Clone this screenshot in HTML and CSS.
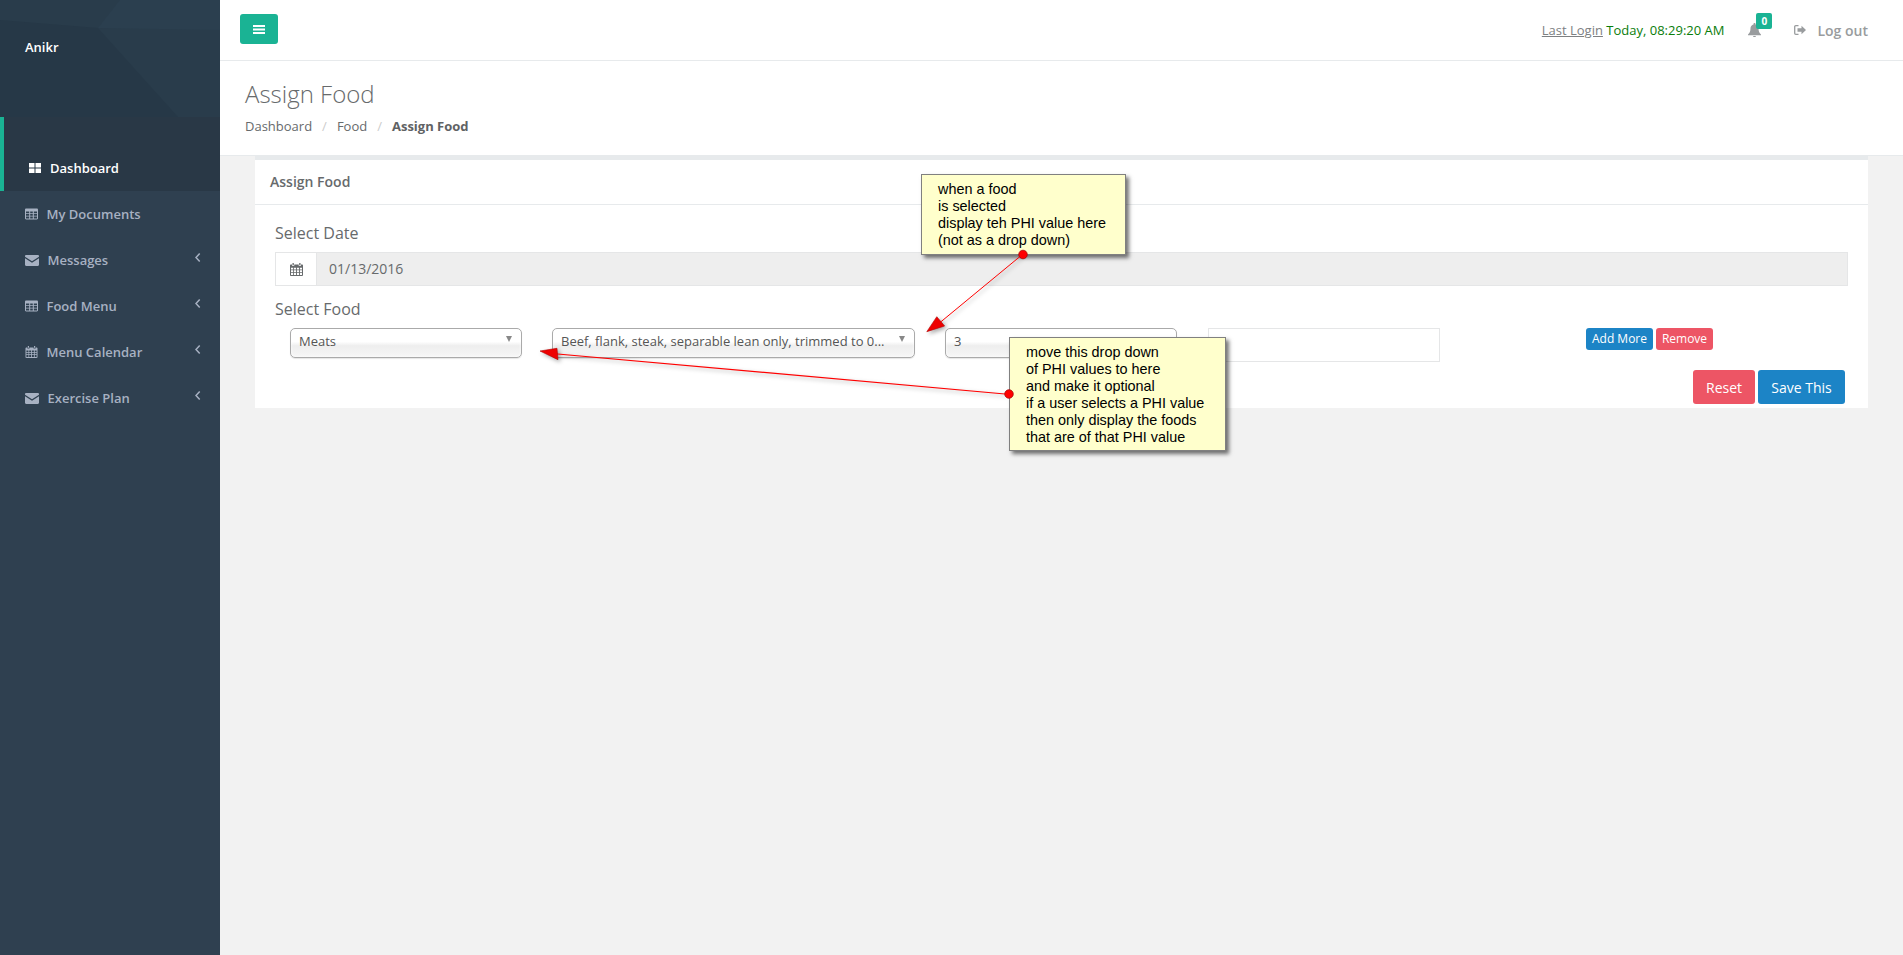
FILE: index.html
```html
<!DOCTYPE html>
<html lang="en">
<head>
<meta charset="utf-8">
<title>Assign Food</title>
<link rel="stylesheet" href="styles.css">
</head>
<body>
<svg width="0" height="0" class="defs">
  <symbol id="i-table" viewBox="0 0 13 11"><path fill-rule="evenodd" d="M0 1.200C0 .5.500 0 1.200 0h10.600c.7 0 1.200.5 1.200 1.200v8.600c0 .7-.5 1.200-1.200 1.200H1.200C.5 11 0 10.500 0 9.800zM1 3v1.800h3.200V3zm4.200 0v1.800h2.600V3zm3.600 0v1.800H12V3zM1 5.600v1.700h3.200V5.600zm4.200 0v1.700h2.600V5.600zm3.600 0v1.700H12V5.600zM1 8.100V10h3.200V8.100zm4.200 0V10h2.600V8.100zm3.600 0V10H12V8.100z"/></symbol>
  <symbol id="i-mail" viewBox="0 0 14 11"><path d="M0 1.200C0 .5.500 0 1.200 0h11.600c.7 0 1.200.5 1.200 1.200v.5L7 6.300 0 1.700zM0 3.300V9.800c0 .7.500 1.200 1.200 1.200h11.600c.7 0 1.200-.5 1.200-1.200V3.300L7 7.800z"/></symbol>
  <symbol id="i-cal" viewBox="0 0 13 13"><path fill-rule="evenodd" d="M2.500 0h1.300v2H2.500zM9.200 0h1.300v2H9.200zM0 2.500C0 1.900.5 1.500 1 1.500h1v1.200h2.300V1.500h4.400v1.200H11V1.500h1c.5 0 1 .4 1 1V12c0 .5-.5 1-1 1H1c-.5 0-1-.5-1-1zM1 4.800v1.700h2.200V4.800zm3 0v1.700h2.100V4.800zm3 0v1.700h2.100V4.800zm3 0v1.700h2V4.800zM1 7.300V9h2.200V7.300zm3 0V9h2.100V7.300zm3 0V9h2.100V7.300zm3 0V9h2V7.300zM1 9.800V12h2.200V9.800zm3 0V12h2.100V9.800zm3 0V12h2.100V9.800zm3 0V12h2V9.800z"/></symbol>
  <symbol id="i-angle" viewBox="0 0 6 9"><path d="M4.700.5 1 4.500l3.700 4" fill="none" stroke="currentColor" stroke-width="1.500"/></symbol>
</svg>

<aside class="sidebar">
  <div class="brand">
    <svg class="brand-bg" viewBox="0 0 220 117" preserveAspectRatio="none">
      <rect width="220" height="117" fill="#293c4b"/>
      <polygon points="98,28 120,0 220,0 220,30" fill="#2b3f4f"/>
      <polygon points="0,20 98,28 178,117 0,117" fill="#263847"/>
    </svg>
    <span class="brand-name">Anikr</span>
  </div>
  <nav class="nav">
    <a class="nav-item active">
      <svg class="ico-large" viewBox="0 0 12 10"><path fill="#fff" d="M0 0h5.500v4.500H0zM6.500 0H12v4.500H6.500zM0 5.500h5.500V10H0zM6.500 5.500H12V10H6.500z"/></svg>
      <span>Dashboard</span>
    </a>
    <a class="nav-item"><svg class="ico ico-t"><use href="#i-table"/></svg><span>My Documents</span></a>
    <a class="nav-item"><svg class="ico ico-m"><use href="#i-mail"/></svg><span>Messages</span><svg class="angle"><use href="#i-angle"/></svg></a>
    <a class="nav-item"><svg class="ico ico-t"><use href="#i-table"/></svg><span>Food Menu</span><svg class="angle"><use href="#i-angle"/></svg></a>
    <a class="nav-item"><svg class="ico ico-t"><use href="#i-cal"/></svg><span>Menu Calendar</span><svg class="angle"><use href="#i-angle"/></svg></a>
    <a class="nav-item"><svg class="ico ico-m"><use href="#i-mail"/></svg><span>Exercise Plan</span><svg class="angle"><use href="#i-angle"/></svg></a>
  </nav>
</aside>

<main class="main">
  <header class="topbar">
    <button class="burger" type="button" aria-label="Menu">
      <svg viewBox="0 0 12 9" width="12" height="9"><path fill="#fff" d="M0 0h12v2H0zM0 3.500h12v2H0zM0 7h12v2H0z"/></svg>
    </button>
    <div class="top-right">
      <span class="login"><u>Last Login</u> <span class="login-time">Today, 08:29:20 AM</span></span>
      <span class="bell">
        <svg viewBox="0 0 13 14" width="13" height="14"><path fill="#999c9e" d="M6.500 0c.6 0 1 .4 1 1v.4c1.900.4 3 2 3 3.900 0 3 .8 4.700 2.500 6.200v.8H0v-.8c1.700-1.500 2.500-3.200 2.500-6.200 0-1.900 1.100-3.500 3-3.900V1c0-.6.400-1 1-1zM5 13h3c0 .6-.7 1-1.500 1S5 13.600 5 13z"/></svg>
        <span class="badge">0</span>
      </span>
      <a class="logout">
        <svg viewBox="0 0 12 10" width="12" height="10"><path fill="none" stroke="#999c9e" stroke-width="1.300" d="M4.500.7H1.800C1.100.7.700 1.100.7 1.800v6.400c0 .7.400 1.100 1.100 1.100h2.700"/><path fill="#999c9e" d="M3.500 3.300h4V.8L12 5 7.500 9.200V6.700h-4z"/></svg>
        <span>Log out</span>
      </a>
    </div>
  </header>

  <section class="heading">
    <h2>Assign Food</h2>
    <ol class="crumbs">
      <li>Dashboard</li>
      <li class="sep">/</li>
      <li>Food</li>
      <li class="sep">/</li>
      <li class="current">Assign Food</li>
    </ol>
  </section>

  <section class="card">
    <h5 class="card-title">Assign Food</h5>
    <div class="card-body">
      <label class="field-label">Select Date</label>
      <div class="input-group">
        <span class="addon"><svg class="addon-ico"><use href="#i-cal"/></svg></span>
        <span class="date-input">01/13/2016</span>
      </div>
      <label class="field-label food-label">Select Food</label>
      <div class="food-row">
        <div class="chosen w-meat"><span>Meats</span><i class="caret"></i></div>
        <div class="chosen w-food"><span>Beef, flank, steak, separable lean only, trimmed to 0...</span><i class="caret"></i></div>
        <div class="chosen w-phi"><span>3</span></div>
        <div class="blank-input"></div>
        <div class="row-btns">
          <button class="btn btn-xs blue" type="button">Add More</button>
          <button class="btn btn-xs red" type="button">Remove</button>
        </div>
      </div>
      <div class="form-actions">
        <button class="btn btn-md red" type="button">Reset</button>
        <button class="btn btn-md blue" type="button">Save This</button>
      </div>
    </div>
  </section>
</main>

<div class="note note-one">when a food<br>is selected<br>display teh PHI value here<br>(not as a drop down)</div>
<div class="note note-two">move this drop down<br>of PHI values to here<br>and make it optional<br>if a user selects a PHI value<br>then only display the foods<br>that are of that PHI value</div>
<svg class="arrows" width="1903" height="955" viewBox="0 0 1903 955">
  <g class="arrow-shadow">
    <path d="M1023 254 937 325" stroke="#ff0000" stroke-width="1" fill="none"/>
    <path d="M1005 394 552 353.500" stroke="#ff0000" stroke-width="1.200" fill="none"/>
    <polygon points="926.800,331.700 936.800,316.700 944.600,326" fill="#ee0000" stroke="#b00000" stroke-width=".6"/>
    <polygon points="540,351 557,348.300 558,359.700" fill="#ee0000" stroke="#b00000" stroke-width=".6"/>
  </g>
  <circle cx="1023" cy="254.500" r="4.300" fill="#ff0000" stroke="#a00000" stroke-width=".7"/>
  <circle cx="1009" cy="394" r="4.300" fill="#ff0000" stroke="#a00000" stroke-width=".7"/>
</svg>
</body>
</html>
```
FILE: styles.css
```css
* { box-sizing: border-box; }
html, body { margin: 0; height: 100%; }
body {
  display: flex;
  width: 1903px;
  height: 955px;
  overflow: hidden;
  position: relative;
  background: #f2f2f2;
  font-family: "Open Sans", "Liberation Sans", sans-serif;
  font-size: 13px;
  color: #676a6c;
}
.defs { position: absolute; }

/* sidebar */
.sidebar { width: 220px; flex: none; background: #2f4050; }
.brand { position: relative; height: 117px; padding: 38px 0 0 25px; }
.brand-bg { position: absolute; inset: 0; width: 100%; height: 100%; }
.brand-name { position: relative; color: #fff; font-weight: 600; font-size: 13px; line-height: 18px; display: block; }
.nav { display: flex; flex-direction: column; }
.nav-item {
  display: flex;
  align-items: center;
  height: 46px;
  padding: 0 19px 0 25px;
  color: #a7b1c2;
  font-weight: 600;
  font-size: 13px;
}
.nav-item.active {
  height: 74px;
  padding: 28px 19px 0 25px;
  color: #fff;
  background: #293846;
  border-left: 4px solid #1ab394;
}
.nav-item span { flex: 1; }
.ico-large { width: 12px; height: 10px; margin-right: 9px; flex: none; }
.ico { fill: #a7b1c2; flex: none; }
.ico-t { width: 13px; height: 12px; margin-right: 8.500px; }
.ico-m { width: 14px; height: 11px; margin-right: 8.500px; }
.angle { width: 6px; height: 9px; color: #a7b1c2; flex: none; margin: -6px 0 0; }

/* top bar */
.main { flex: 1; min-width: 0; }
.topbar {
  display: flex;
  align-items: flex-start;
  justify-content: space-between;
  height: 61px;
  padding: 14px 35px 0 20px;
  background: #fff;
  border-bottom: 1px solid #e7eaec;
}
.burger {
  display: flex;
  align-items: center;
  justify-content: center;
  width: 38px;
  height: 30px;
  padding: 0;
  border: 0;
  border-radius: 3px;
  background: #1ab394;
}
.top-right { display: flex; align-items: center; height: 32px; color: #999c9e; }
.login { color: #7d8082; font-size: 13px; }
.login-time { color: #0a7d0a; }
.bell { position: relative; margin-left: 24px; height: 14px; display: block; }
.bell svg { display: block; }
.badge {
  position: absolute;
  left: 8px;
  top: -10px;
  width: 16px;
  height: 16px;
  border-radius: 2px;
  background: #1ab394;
  color: #fff;
  font-size: 10px;
  font-weight: 700;
  line-height: 16px;
  text-align: center;
}
.logout { display: flex; align-items: center; margin-left: 33px; font-weight: 600; font-size: 14px; }
.logout span { margin-left: 11px; }

/* page heading */
.heading { height: 95px; padding: 16px 0 0 25px; background: #fff; border-bottom: 1px solid #e7eaec; }
.heading h2 { margin: 0; font-size: 24px; font-weight: 300; line-height: 34px; color: #676a6c; }
.crumbs { display: flex; margin: 6px 0 0; padding: 0; list-style: none; font-size: 13px; line-height: 18px; }
.crumbs .sep { color: #ccc; margin: 0 10px; }
.crumbs .current { font-weight: 700; color: #5f6264; }

/* card */
.card { margin: 0 35px 0 35px; background: #fff; border-top: 4px solid #e7eaec; }
.card-title {
  height: 45px;
  margin: 0;
  padding: 0 15px;
  font-size: 14px;
  font-weight: 600;
  line-height: 43px;
  color: #676a6c;
  border-bottom: 1px solid #e7eaec;
}
.card-body { height: 203px; padding: 17px 20px 0; }
.field-label { display: block; font-size: 16px; line-height: 22px; color: #676a6c; }
.food-label { margin-top: 12px; }
.input-group { display: flex; height: 34px; margin-top: 8px; border: 1px solid #e5e6e7; }
.addon { display: flex; align-items: center; justify-content: center; width: 41px; background: #fff; border-right: 1px solid #e5e6e7; }
.addon-ico { width: 13px; height: 13px; fill: #676a6c; }
.date-input { flex: 1; padding-left: 12px; background: #eee; font-size: 14px; line-height: 32px; }

.food-row { display: flex; align-items: flex-start; margin: 8px 0 0 15px; }
.chosen {
  position: relative;
  flex: none;
  height: 30px;
  padding: 3px 8px 0;
  margin-right: 31px;
  border: 1px solid #aaa;
  border-radius: 5px;
  background: linear-gradient(#fff 0, #fff 45%, #eee 60%, #f6f6f6 100%);
  color: #555;
  font-size: 13px;
  line-height: 18px;
  box-shadow: inset 0 0 3px #fff, 0 1px 1px rgba(0,0,0,.1);
}
.w-meat { width: 232px; margin-right: 30px; }
.w-food { width: 363px; margin-right: 30px; }
.w-phi { width: 232px; }
.caret {
  position: absolute;
  right: 9px;
  top: 7px;
  width: 0;
  height: 0;
  border-left: 3.500px solid transparent;
  border-right: 3.500px solid transparent;
  border-top: 6px solid #888;
}
.blank-input { width: 232px; height: 34px; flex: none; border: 1px solid #e5e6e7; }
.row-btns { display: flex; gap: 3px; margin-left: 146px; }
.btn { border: 0; border-radius: 3px; padding: 0; color: #fff; font-family: inherit; }
.btn-xs { height: 22px; font-size: 12px; line-height: 22px; }
.row-btns .blue { width: 67px; }
.row-btns .red { width: 57px; }
.blue { background: #1c84c6; }
.red { background: #ed5565; }
.form-actions { display: flex; justify-content: flex-end; gap: 3px; margin: 8px 3px 0 0; }
.btn-md { height: 34px; font-size: 14px; }
.form-actions .red { width: 62px; }
.form-actions .blue { width: 87px; }

/* annotations laid over the page */
.arrows { position: absolute; left: 0; top: 0; pointer-events: none; }
.arrow-shadow { filter: drop-shadow(2px 2px 2px rgba(0,0,0,.35)); }
.note {
  position: absolute;
  padding: 6px 0 0 16px;
  background: #ffffcc;
  border: 1px solid #808080;
  box-shadow: 3px 3px 4px rgba(0,0,0,.55);
  color: #000;
  font-family: "Liberation Sans", Arial, sans-serif;
  font-size: 14.400px;
  line-height: 17px;
}
.note-one { left: 921px; top: 174px; width: 205px; height: 81px; }
.note-two { left: 1009px; top: 337px; width: 217px; height: 114px; }
```
